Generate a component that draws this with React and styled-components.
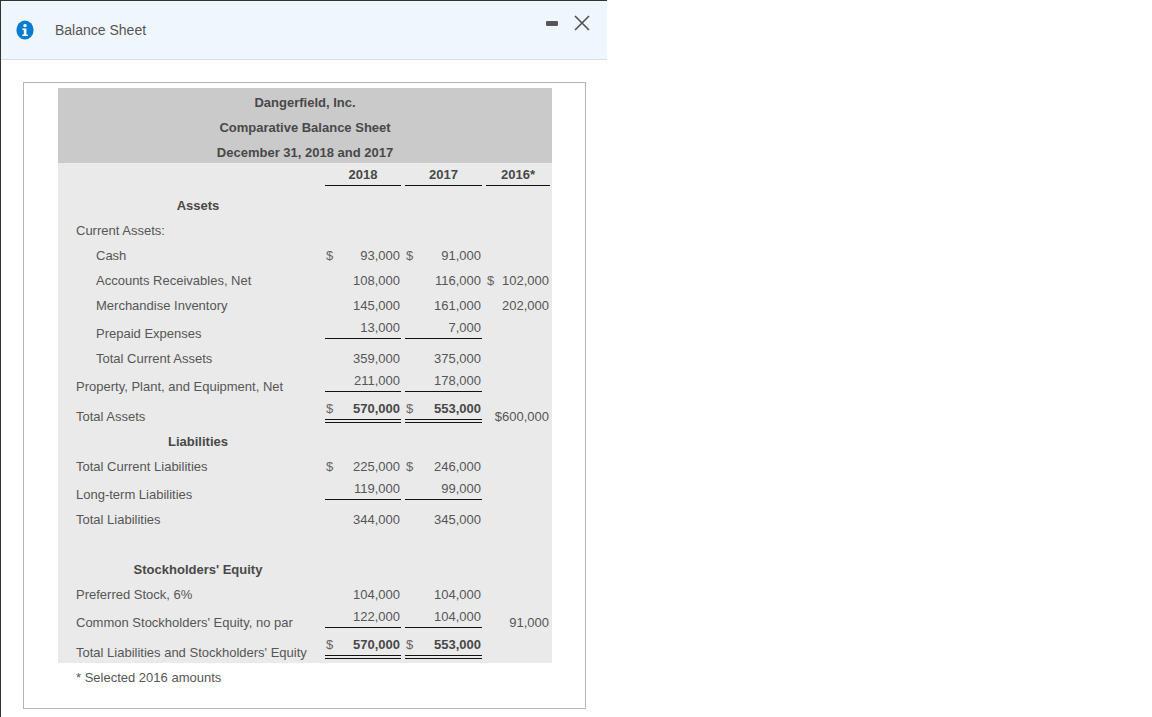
import React from 'react';
import styled, { createGlobalStyle, css } from 'styled-components';

const GlobalStyle = createGlobalStyle`
  html, body { margin: 0; padding: 0; background: #fff; }
  body { font-family: "Liberation Sans", Arial, sans-serif; color: #565656; }
`;

const Window = styled.div`
  width: 606px;
  height: 716px;
  border-top: 1px solid #333;
  border-left: 1px solid #333;
  overflow: hidden;
`;

const Header = styled.header`
  display: flex;
  align-items: center;
  height: 58px;
  padding: 0 17px 0 15px;
  background: #f0f6fe;
  border-bottom: 1px solid #cfe0f0;
`;

const Title = styled.h1`
  flex: 1;
  margin: 0 0 0 21px;
  font-size: 14px;
  font-weight: normal;
  color: #555;
`;

const Controls = styled.div`
  display: flex;
  align-items: center;
  gap: 16px;
  margin-bottom: 14px;
`;

const Panel = styled.section`
  margin: 22px 0 0 22px;
  padding: 5px 0 0 34px;
  width: 527px;
  height: 620px;
  border: 1px solid #b5b5b5;
`;

const Sheet = styled.div`
  width: 494px;
  background: #eaeaea;
  font-size: 13px;
`;

const Banner = styled.div`
  background: #cacaca;
`;

const BannerLine = styled.div`
  height: 25px;
  line-height: 29px;
  text-align: center;
  font-weight: bold;
  color: #484848;
`;

const Row = styled.div`
  display: grid;
  grid-template-columns: 263px 76px 77px 64px;
  column-gap: 4px;
  height: ${p => p.$h || 25}px;
`;

const Label = styled.div`
  padding-left: ${p => (p.$indent ? 38 : 18)}px;
  padding-right: 1px;
  height: 25px;
  line-height: 25px;
  align-self: ${p => (p.$low ? 'end' : 'start')};
  margin-bottom: ${p => p.$lift || 0}px;
  white-space: nowrap;
  ${p => p.$head && css`
    font-weight: bold;
    text-align: center;
    color: #484848;
  `}
`;

const ruleStyles = {
  single: css`border-bottom: 1px solid #111;`,
  double: css`border-bottom: 4px double #111;`,
};

const Amount = styled.div`
  display: flex;
  justify-content: space-between;
  box-sizing: border-box;
  padding: 0 1px;
  height: ${p => p.$h || 25}px;
  line-height: ${p => p.$lh || 25}px;
  ${p => p.$bold && css`font-weight: bold; color: #484848;`}
  ${p => p.$rule && ruleStyles[p.$rule]}
  ${p => p.$low && css`align-self: end;`}
`;

const YearCell = styled.div`
  box-sizing: border-box;
  height: 23px;
  line-height: 23px;
  text-align: center;
  font-weight: bold;
  color: #484848;
  border-bottom: 1px solid #111;
`;

const Dollar = styled.span`
  font-weight: normal;
  color: #666;
`;

const Footnote = styled.p`
  margin: 0;
  padding-left: 18px;
  height: 25px;
  line-height: 30px;
  font-size: 13px;
`;

const InfoIcon = () => (
  <svg width="18" height="20" viewBox="0 0 18 20" aria-hidden="true">
    <ellipse cx="9" cy="10" rx="8.6" ry="9.6" fill="#0a7cd0" />
    <circle cx="9" cy="5.6" r="1.7" fill="#fff" />
    <path d="M6.4 8.4h4v6h1.4v1.6H6.4v-1.6h1.4V10H6.4z" fill="#fff" />
  </svg>
);

const MinimizeIcon = () => (
  <svg width="12" height="5" viewBox="0 0 12 5" aria-hidden="true">
    <rect width="12" height="5" rx="1.2" fill="#555" />
  </svg>
);

const CloseIcon = () => (
  <svg width="16" height="16" viewBox="0 0 16 16" aria-hidden="true">
    <path d="M1 1l14 14M15 1L1 15" stroke="#555" strokeWidth="1.7" fill="none" />
  </svg>
);

// one money cell: sign on the left, figure on the right
const Money = ({ sign, value, ...rest }) => (
  <Amount {...rest}>
    <Dollar>{sign ? '$' : ''}</Dollar>
    <span>{value}</span>
  </Amount>
);

const SIMPLE = { $h: 25 };
const UNDER = { $h: 21, $lh: 19, $rule: 'single' };
const TOTAL = { $h: 24, $lh: 19, $rule: 'double' };

const App = () => (
  <>
    <GlobalStyle />
    <Window>
      <Header>
        <InfoIcon />
        <Title>Balance Sheet</Title>
        <Controls>
          <MinimizeIcon />
          <CloseIcon />
        </Controls>
      </Header>
      <Panel>
        <Sheet>
          <Banner>
            <BannerLine>Dangerfield, Inc.</BannerLine>
            <BannerLine>Comparative Balance Sheet</BannerLine>
            <BannerLine>December 31, 2018 and 2017</BannerLine>
          </Banner>

          <Row $h={30}>
            <div />
            <YearCell>2018</YearCell>
            <YearCell>2017</YearCell>
            <YearCell>2016*</YearCell>
          </Row>

          <Row><Label $head>Assets</Label></Row>
          <Row><Label>Current Assets:</Label></Row>
          <Row>
            <Label $indent>Cash</Label>
            <Money sign value="93,000" {...SIMPLE} />
            <Money sign value="91,000" {...SIMPLE} />
          </Row>
          <Row>
            <Label $indent>Accounts Receivables, Net</Label>
            <Money value="108,000" {...SIMPLE} />
            <Money value="116,000" {...SIMPLE} />
            <Money sign value="102,000" {...SIMPLE} />
          </Row>
          <Row>
            <Label $indent>Merchandise Inventory</Label>
            <Money value="145,000" {...SIMPLE} />
            <Money value="161,000" {...SIMPLE} />
            <Money value="202,000" {...SIMPLE} />
          </Row>
          <Row $h={28}>
            <Label $indent $low>Prepaid Expenses</Label>
            <Money value="13,000" {...UNDER} />
            <Money value="7,000" {...UNDER} />
          </Row>
          <Row>
            <Label $indent>Total Current Assets</Label>
            <Money value="359,000" {...SIMPLE} />
            <Money value="375,000" {...SIMPLE} />
          </Row>
          <Row $h={28}>
            <Label $low>Property, Plant, and Equipment, Net</Label>
            <Money value="211,000" {...UNDER} />
            <Money value="178,000" {...UNDER} />
          </Row>
          <Row $h={30}>
            <Label $low>Total Assets</Label>
            <Money sign value="570,000" $bold {...TOTAL} />
            <Money sign value="553,000" $bold {...TOTAL} />
            <Money $low value="$600,000" {...SIMPLE} />
          </Row>

          <Row><Label $head>Liabilities</Label></Row>
          <Row>
            <Label>Total Current Liabilities</Label>
            <Money sign value="225,000" {...SIMPLE} />
            <Money sign value="246,000" {...SIMPLE} />
          </Row>
          <Row $h={28}>
            <Label $low>Long-term Liabilities</Label>
            <Money value="119,000" {...UNDER} />
            <Money value="99,000" {...UNDER} />
          </Row>
          <Row>
            <Label>Total Liabilities</Label>
            <Money value="344,000" {...SIMPLE} />
            <Money value="345,000" {...SIMPLE} />
          </Row>
          <Row />

          <Row><Label $head>Stockholders' Equity</Label></Row>
          <Row>
            <Label>Preferred Stock, 6%</Label>
            <Money value="104,000" {...SIMPLE} />
            <Money value="104,000" {...SIMPLE} />
          </Row>
          <Row $h={28}>
            <Label $low>Common Stockholders' Equity, no par</Label>
            <Money value="122,000" {...UNDER} />
            <Money value="104,000" {...UNDER} />
            <Money $low value="91,000" {...SIMPLE} />
          </Row>
          <Row $h={28}>
            <Label $low $lift={-2}>Total Liabilities and Stockholders' Equity</Label>
            <Money sign value="570,000" $bold {...TOTAL} />
            <Money sign value="553,000" $bold {...TOTAL} />
          </Row>
        </Sheet>
        <Footnote>* Selected 2016 amounts</Footnote>
      </Panel>
    </Window>
  </>
);

export default App;
